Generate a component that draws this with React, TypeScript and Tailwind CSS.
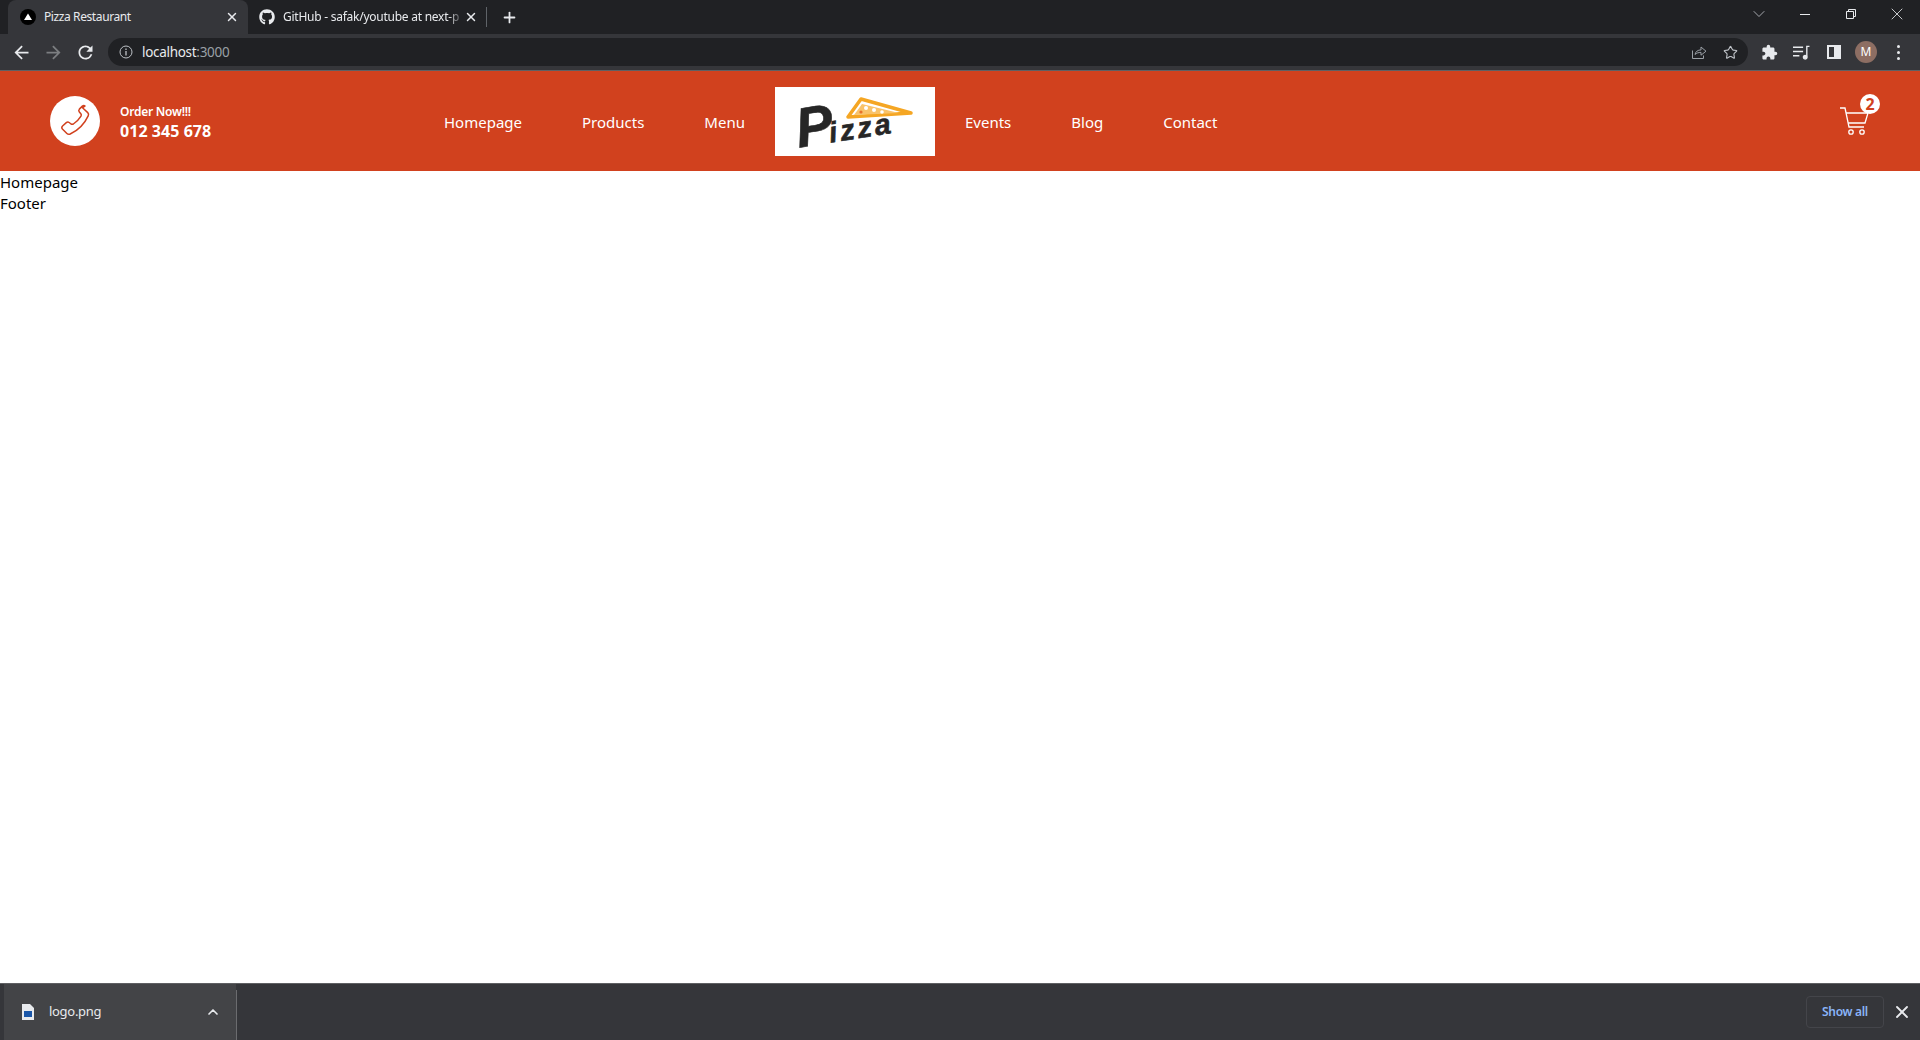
import { Star, X, ChevronDown, ChevronUp, Plus } from "lucide-react"
import { FaGithub } from "react-icons/fa"

const navLeft = ["Homepage", "Products", "Menu"]
const navRight = ["Events", "Blog", "Contact"]

function Svg24({ d, className }: { d: string; className?: string }) {
  return (
    <svg viewBox="0 0 24 24" fill="currentColor" className={className}>
      <path d={d} />
    </svg>
  )
}

function TabStrip() {
  return (
    <div className="flex items-center h-[34px] pl-[8px] bg-[#202124] text-[#e8eaed]">
      <div className="flex items-center w-[240px] h-[34px] pl-[12px] pr-[9px] rounded-t-lg bg-[#35363a]">
        <svg viewBox="0 0 16 16" className="w-4 h-4 shrink-0">
          <circle cx="8" cy="8" r="8" fill="#000" />
          <path d="M8 4.500 L12 11 H4 Z" fill="#fff" />
        </svg>
        <span className="ml-[8px] flex-1 whitespace-nowrap text-[12px] tracking-[-0.4px]">Pizza Restaurant</span>
        <X size={14} strokeWidth={2.5} className="shrink-0" />
      </div>
      <div className="flex items-center w-[238px] h-[34px] pl-[11px] pr-[8px]">
        <FaGithub size={16} className="shrink-0" />
        <span className="ml-[8px] flex-1 whitespace-nowrap text-[12px] tracking-[-0.25px] [mask-image:linear-gradient(to_left,transparent,black_16px)]">GitHub - safak/youtube at next-p</span>
        <X size={14} strokeWidth={2.5} className="shrink-0" />
      </div>
      <div className="w-px h-[20px] bg-[#5f6368]" />
      <Plus size={17} strokeWidth={2.5} className="ml-[14px]" />
      <div className="flex-1" />
      <div className="flex items-center h-full">
        <ChevronDown size={20} strokeWidth={1} className="mr-[31px] mt-[-6px] text-[#bdc1c6]" />
        <svg viewBox="0 0 10 10" className="w-[10px] h-[10px] mr-[36px] mt-[-6px]" stroke="currentColor" fill="none">
          <path d="M0 5.500H10" />
        </svg>
        <svg viewBox="0 0 10 10" className="w-[10px] h-[10px] mr-[31px] mt-[-6px]" stroke="currentColor" fill="none">
          <path d="M.5 2.500h7v7h-7zM2.500 2.500V.5h7v7h-2" />
        </svg>
        <X size={20} strokeWidth={1} className="mr-[13px] mt-[-6px]" />
      </div>
    </div>
  )
}

function Toolbar() {
  return (
    <div className="flex items-center h-[37px] border-b border-[#5f6063] bg-[#35363a] text-[#e8eaed]">
      <Svg24 className="w-[21px] h-[21px] ml-[11px]" d="M20 11H7.830l5.590-5.590L12 4l-8 8 8 8 1.410-1.410L7.830 13H20v-2z" />
      <Svg24 className="w-[21px] h-[21px] ml-[11px] text-[#7c7e81]" d="M4 11h12.170l-5.590-5.590L12 4l8 8-8 8-1.410-1.410L16.170 13H4v-2z" />
      <Svg24 className="w-[21px] h-[21px] ml-[11px]" d="M17.650 6.350A7.958 7.958 0 0 0 12 4c-4.420 0-7.990 3.580-7.990 8s3.570 8 7.990 8c3.730 0 6.840-2.550 7.730-6h-2.080A5.990 5.990 0 0 1 12 18c-3.310 0-6-2.690-6-6s2.690-6 6-6c1.660 0 3.140.69 4.220 1.780L13 11h7V4l-2.350 2.350z" />
      <div className="flex items-center w-[1640px] h-[28px] ml-[12px] pl-[11px] pr-[10px] rounded-full bg-[#202124]">
        <svg viewBox="0 0 14 14" className="w-[14px] h-[14px] text-[#bdc1c6]" fill="none" stroke="currentColor">
          <circle cx="7" cy="7" r="6" />
          <path d="M7 6v4.500M7 3.500v1.500" strokeWidth="1.3" />
        </svg>
        <span className="ml-[9px] text-[13.5px] tracking-[-0.3px]">
          localhost<span className="text-[#9aa0a6]">:3000</span>
        </span>
        <div className="flex-1" />
        <svg viewBox="0 0 16 16" className="w-[16px] h-[16px] text-[#9aa0a6]" fill="none" stroke="currentColor">
          <path d="M1.500 6.500v8h11v-3" />
          <path d="M4 10.500c.5-3 3-4.600 6-4.600V3l5 4.200-5 4V8.400c-2.500 0-4.600.6-6 2.100z" />
        </svg>
        <Star size={15} strokeWidth={1.8} className="ml-[16px] text-[#bdc1c6]" />
      </div>
      <Svg24 className="w-[17px] h-[17px] ml-[13px]" d="M20.500 11H19V7c0-1.100-.9-2-2-2h-4V3.500a2.500 2.500 0 0 0-5 0V5H4c-1.100 0-1.990.9-1.990 2v3.800H3.500c1.490 0 2.700 1.210 2.700 2.700s-1.210 2.700-2.700 2.700H2V20c0 1.100.9 2 2 2h3.800v-1.500c0-1.490 1.210-2.700 2.700-2.700 1.490 0 2.700 1.210 2.700 2.700V22H17c1.100 0 2-.9 2-2v-4h1.500a2.500 2.500 0 0 0 0-5z" />
      <svg viewBox="0 0 16 14" className="w-[17px] h-[15px] ml-[15px]" fill="none" stroke="currentColor" strokeWidth="1.3">
        <path d="M0 2h9.500M0 6h9.500M0 10h6" />
        <path d="M13 11V1.200h2.500" />
        <circle cx="11.500" cy="11.500" r="1.700" fill="currentColor" />
      </svg>
      <div className="flex w-[14px] h-[14px] ml-[17px] border-2 border-[#e8eaed]">
        <div className="flex-1" />
        <div className="w-[5px] bg-[#e8eaed]" />
      </div>
      <div className="flex items-center justify-center w-[22px] h-[22px] ml-[14px] rounded-full bg-[#8d6e63] text-[12px] text-white">M</div>
      <div className="flex flex-col gap-[3px] ml-[20px]">
        <div className="w-[3px] h-[3px] rounded-full bg-[#e8eaed]" />
        <div className="w-[3px] h-[3px] rounded-full bg-[#e8eaed]" />
        <div className="w-[3px] h-[3px] rounded-full bg-[#e8eaed]" />
      </div>
    </div>
  )
}

function PizzaLogo() {
  return (
    <svg viewBox="0 0 160 69" className="block w-[160px] h-[69px]">
      <path d="M73 30 L86 12 L136 26 Z" fill="#fff" stroke="#f5a623" strokeWidth="3.500" strokeLinejoin="round" />
      <path d="M79 28 L87 17 L124 26 Z" fill="#f9c36a" />
      <circle cx="91" cy="21" r="2" fill="#fff" />
      <circle cx="99" cy="23" r="2" fill="#fff" />
      <circle cx="107" cy="25" r="1.800" fill="#fff" />
      <circle cx="86" cy="25" r="1.600" fill="#e8702a" />
      <text transform="rotate(-9 72 40)" x="21" y="53" fill="#262626" stroke="#262626" strokeWidth="0.6" fontFamily="'Liberation Sans', sans-serif" fontStyle="italic" fontWeight="700">
        <tspan fontSize="56">P</tspan>
        <tspan fontSize="29" dx="-5" letterSpacing="3">izza</tspan>
      </text>
    </svg>
  )
}

function CartIcon() {
  return (
    <svg viewBox="0 0 30 30" className="w-[30px] h-[30px]" fill="none" stroke="#fff" strokeWidth="1.3">
      <path d="M0 2h5l4 19h15" />
      <path d="M6 7h22l-3 10H8.200" />
      <circle cx="11" cy="26" r="2.200" />
      <circle cx="22" cy="26" r="2.200" />
    </svg>
  )
}

function Navbar() {
  return (
    <header className="flex items-center h-[100px] px-[50px] bg-[#d1411e] text-white">
      <div className="flex flex-1 items-center gap-[20px]">
        <div className="flex items-center justify-center w-[50px] h-[50px] rounded-full bg-white">
          <svg viewBox="0 0 24 24" className="w-[36px] h-[36px]" fill="none" stroke="#d1411e" strokeWidth="1" strokeLinejoin="round">
            <path d="M17 3.200l3.500 3.200c.6.6.7 1.400.3 2.200-2.500 5.400-6.600 9.600-12 12.100-.8.300-1.600.200-2.200-.4l-3-3c-.5-.6-.5-1.400.1-2l2.500-2.200c.6-.5 1.300-.5 1.900-.1l1.300 1c.5.300 1 .300 1.500 0 2.100-1.400 3.800-3.200 5.100-5.300.3-.5.300-1-.1-1.500l-1-1.200c-.5-.6-.5-1.300 0-1.900l2-2c.6-.5 1.300-.5 1.800-.1z" />
          </svg>
        </div>
        <div className="flex flex-col pt-[4px]">
          <span className="text-[12px] leading-[16px] font-semibold tracking-[-0.25px]">Order Now!!!</span>
          <span className="text-[16px] leading-[22px] font-bold tracking-[0.05px]">012 345 678</span>
        </div>
      </div>
      <ul className="flex flex-[3] items-center text-[15px]">
        {navLeft.map((item) => (
          <li key={item} className="mx-[30px] pt-[2px]">{item}</li>
        ))}
        <li className="bg-white"><PizzaLogo /></li>
        {navRight.map((item) => (
          <li key={item} className="mx-[30px] pt-[2px]">{item}</li>
        ))}
      </ul>
      <div className="flex flex-1 justify-end">
        <div className="relative">
          <CartIcon />
          <div className="absolute top-[-12px] right-[-10px] flex items-center justify-center w-[20px] h-[20px] rounded-full bg-white text-[16px] font-bold leading-none text-[#d1411e]">2</div>
        </div>
      </div>
    </header>
  )
}

function DownloadBar() {
  return (
    <div className="flex items-center h-[57px] border-t border-[#5f6063] bg-[#35363a]">
      <div className="flex items-center w-[232px] h-full ml-[4px] bg-[#434447]">
        <svg viewBox="0 0 12 16" className="w-[12px] h-[16px] ml-[18px]">
          <path d="M0 0h8l4 4v12H0z" fill="#e8eaed" />
          <rect x="2" y="7" width="8" height="6" fill="#1a56a8" />
        </svg>
        <span className="ml-[15px] flex-1 text-[13px] text-[#e8eaed] tracking-[-0.3px]">logo.png</span>
        <ChevronUp size={16} strokeWidth={2.500} className="mr-[15px] text-[#e8eaed]" />
      </div>
      <div className="w-px h-[50px] self-end bg-[#6b6c6f]" />
      <div className="flex-1" />
      <button className="flex items-center justify-center w-[78px] h-[32px] rounded border border-[#44454a] text-[12px] font-semibold text-[#8ab4f8] tracking-[-0.3px]">Show all</button>
      <X size={20} strokeWidth={2.2} className="ml-[8px] mr-[8px] text-[#e8eaed]" />
    </div>
  )
}

export default function App() {
  return (
    <div className="flex flex-col h-[1040px] overflow-hidden bg-white font-['Noto_Sans',sans-serif]">
      <TabStrip />
      <Toolbar />
      <Navbar />
      <main className="flex-1 pt-[1px] text-[15px] leading-[21px] text-black">
        <div>Homepage</div>
        <div>Footer</div>
      </main>
      <DownloadBar />
    </div>
  )
}
